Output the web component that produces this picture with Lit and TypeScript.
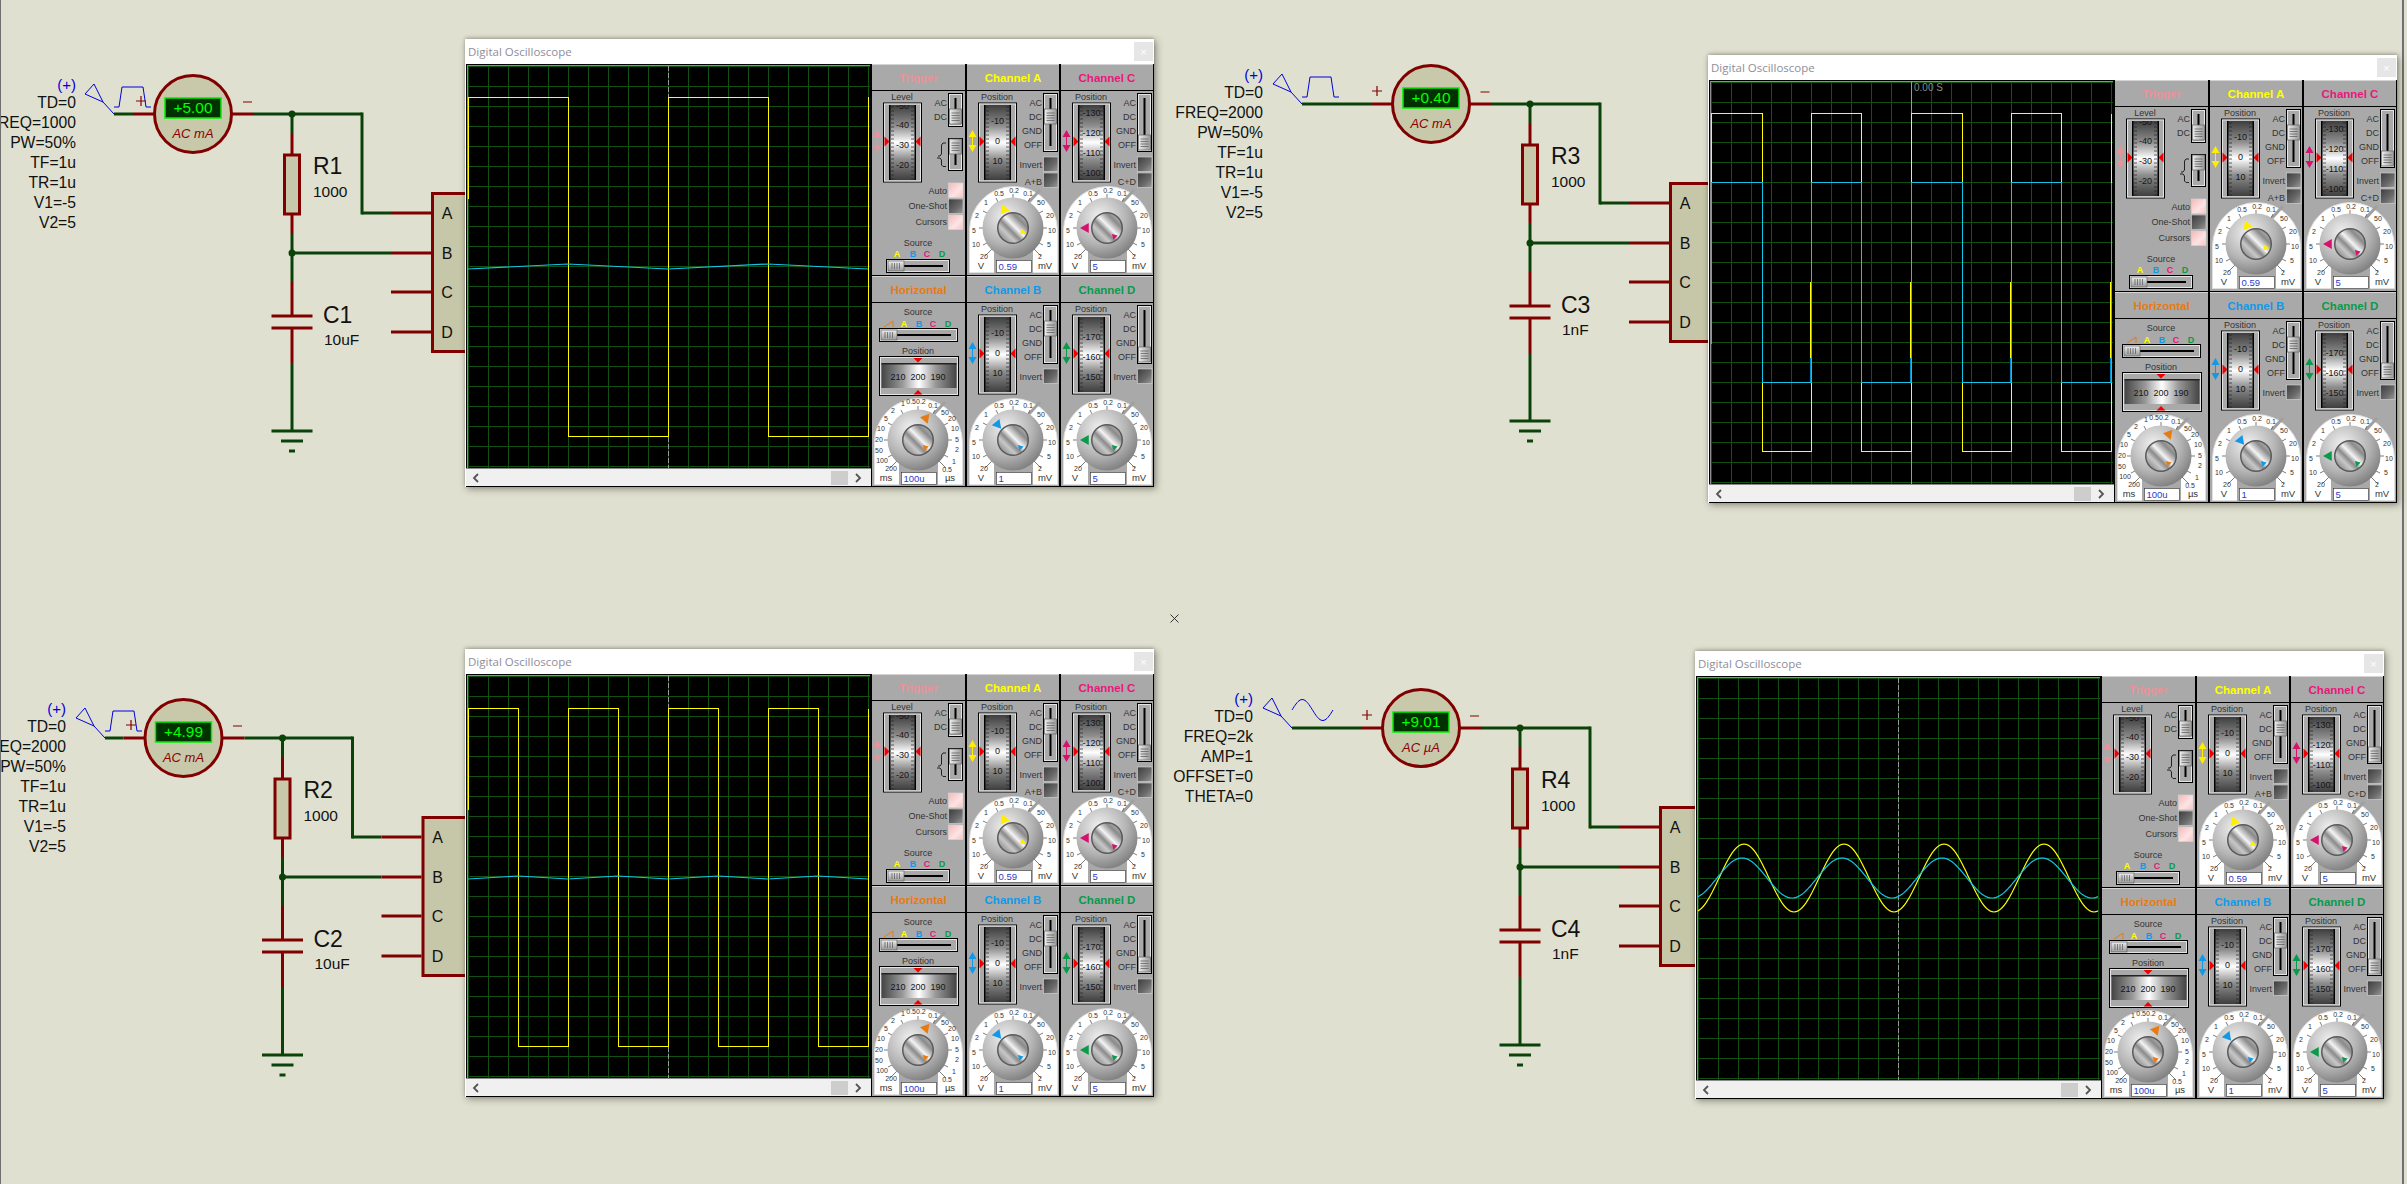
import { LitElement, html, svg, css } from "lit";
import { customElement, property } from "lit/decorators.js";

const RED = "#800000";
const GREEN = "#0a420a";
const BLUE = "#0000dd";

type CircuitDef = {
  ax: number; ay: number; src: number; right: number; plus: number; minus: number;
  reading: string; unit: string; r: string; c: string; cv: string; lines: string[]; sine?: boolean;
};

const CIRCUITS: CircuitDef[] = [
  { ax: 193, ay: 114, src: 114, right: 76, plus: 141, minus: 247, reading: "+5.00", unit: "AC mA", r: "R1", c: "C1", cv: "10uF",
    lines: ["TD=0", "FREQ=1000", "PW=50%", "TF=1u", "TR=1u", "V1=-5", "V2=5"] },
  { ax: 1431, ay: 104, src: 1302, right: 1263, plus: 1377, minus: 1484.5, reading: "+0.40", unit: "AC mA", r: "R3", c: "C3", cv: "1nF",
    lines: ["TD=0", "FREQ=2000", "PW=50%", "TF=1u", "TR=1u", "V1=-5", "V2=5"] },
  { ax: 183.5, ay: 738, src: 105, right: 66, plus: 131, minus: 237, reading: "+4.99", unit: "AC mA", r: "R2", c: "C2", cv: "10uF",
    lines: ["TD=0", "FREQ=2000", "PW=50%", "TF=1u", "TR=1u", "V1=-5", "V2=5"] },
  { ax: 1421, ay: 728, src: 1292, right: 1253, plus: 1367, minus: 1474, reading: "+9.01", unit: "AC µA", r: "R4", c: "C4", cv: "1nF", sine: true,
    lines: ["TD=0", "FREQ=2k", "AMP=1", "OFFSET=0", "THETA=0"] },
];

const seg = (x1: number, y1: number, x2: number, y2: number, c: string, w = 3) =>
  svg`<line x1=${x1} y1=${y1} x2=${x2} y2=${y2} stroke=${c} stroke-width=${w} />`;

function circuit(d: CircuitDef) {
  const { ax, ay, src } = d;
  const jx = ax + 99;
  const sinePts: string[] = [];
  for (let i = 0; i <= 41; i++) sinePts.push(`${src + i},${(ay - 18 - 10.5 * Math.sin((i / 41) * 2 * Math.PI)).toFixed(1)}`);
  const pulse = `M${src} ${ay - 7}h5l3 -20h21l3 20h5`;
  return svg`
    <g>
      ${seg(src, ay, ax - 60, ay, GREEN)}${seg(ax - 60, ay, ax - 38, ay, RED)}
      ${seg(ax + 38, ay, ax + 61, ay, RED)}${seg(ax + 61, ay, ax + 169, ay, GREEN)}
      ${seg(ax + 169, ay - 1.5, ax + 169, ay + 100.5, GREEN)}
      ${seg(ax + 169, ay + 99, ax + 198, ay + 99, GREEN)}${seg(ax + 198, ay + 99, ax + 238, ay + 99, RED)}
      ${seg(jx, ay + 139, ax + 198, ay + 139, GREEN)}${seg(ax + 198, ay + 139, ax + 238, ay + 139, RED)}
      ${seg(ax + 198, ay + 178, ax + 238, ay + 178, RED)}${seg(ax + 198, ay + 218, ax + 238, ay + 218, RED)}
      ${seg(jx, ay, jx, ay + 20, GREEN)}${seg(jx, ay + 20, jx, ay + 41, RED)}
      ${seg(jx, ay + 99, jx, ay + 119, RED)}${seg(jx, ay + 119, jx, ay + 168, GREEN)}
      ${seg(jx, ay + 168, jx, ay + 202, RED)}
      ${seg(jx - 20.5, ay + 202, jx + 20.5, ay + 202, RED)}${seg(jx - 20.5, ay + 214, jx + 20.5, ay + 214, RED)}
      ${seg(jx, ay + 214, jx, ay + 249, RED)}${seg(jx, ay + 249, jx, ay + 317, GREEN)}
      ${seg(jx - 20.5, ay + 317, jx + 20.5, ay + 317, GREEN)}${seg(jx - 11, ay + 327, jx + 11, ay + 327, GREEN)}
      ${seg(jx - 3, ay + 337, jx + 3, ay + 337, GREEN)}
      <circle cx=${jx} cy=${ay} r="3.5" fill=${GREEN} /><circle cx=${jx} cy=${ay + 139} r="3.5" fill=${GREEN} />
      <rect x=${jx - 7.5} y=${ay + 41} width="15" height="59" fill="#c8c8aa" stroke=${RED} stroke-width="3" />
      <rect x=${ax + 239.5} y=${ay + 79.5} width="60" height="158" fill="#c6c6a8" stroke=${RED} stroke-width="3" />
      ${["A", "B", "C", "D"].map((l, i) => svg`<text class="pin" x=${ax + 254} y=${ay + [105, 145, 184, 224][i]} text-anchor="middle">${l}</text>`)}
      <circle cx=${ax} cy=${ay} r="38.5" fill="#c8c8aa" stroke=${RED} stroke-width="3" />
      <rect x=${ax - 28} y=${ay - 16} width="56" height="20" fill="#003200" stroke="#00f000" stroke-width="1.5" />
      <text class="lcd" x=${ax} y=${ay - 1} text-anchor="middle">${d.reading}</text>
      <text class="unit" x=${ax} y=${ay + 24} text-anchor="middle">${d.unit}</text>
      <path d="M${src - 20} ${ay - 30}l-9 10l18 8zM${src - 11} ${ay - 12}L${src} ${ay}" fill="none" stroke=${BLUE} />
      ${d.sine
        ? svg`<polyline points=${sinePts.join(" ")} fill="none" stroke=${BLUE} />`
        : svg`<path d=${pulse} fill="none" stroke=${BLUE} />`}
      <path d="M${d.plus - 5} ${ay - 13}h10M${d.plus} ${ay - 18}v10M${d.minus - 4} ${ay - 12}h9" stroke=${RED} stroke-width="1.2" fill="none" />
      <text class="plus" x=${d.right} y=${ay - 24} text-anchor="end">(+)</text>
      ${d.lines.map((l, i) => svg`<text class="prop" x=${d.right} y=${ay - 6 + i * 20} text-anchor="end">${l}</text>`)}
      <text class="ref" x=${ax + 120} y=${ay + 60}>${d.r}</text>
      <text class="val" x=${ax + 120} y=${ay + 83}>1000</text>
      <text class="ref" x=${ax + 130} y=${ay + 209}>${d.c}</text>
      <text class="val" x=${ax + 131} y=${ay + 231}>${d.cv}</text>
    </g>`;
}

/* ---------------- oscilloscope panel pieces (cell-local coordinates) ---------------- */

const t = (x: number, y: number, s: string, cls = "lb", a = "middle") =>
  svg`<text class=${cls} x=${x} y=${y} text-anchor=${a}>${s}</text>`;

function updown(color: string) {
  return svg`<g fill=${color}>
    <path d="M5.5 39l4 7h-8zM5.5 61l4 -7h-8z" />
    <rect x="5" y="45" width="1" height="10" />
  </g>`;
}

function drum(labels: [string, number][]) {
  const ticks: string[] = [];
  for (let y = 16; y < 89; y += 4) {
    const l = (y - 16) % 20 === 14 ? 5 : 3;
    ticks.push(`M19 ${y}h${l}M42 ${y}h-${l}`);
  }
  return svg`
    <rect x="11.5" y="12" width="38" height="79" fill="#a9a9a9" stroke="#000" />
    <rect x="12.5" y="13" width="36" height="77" fill="none" stroke="#e4e4e4" />
    <rect x="17" y="14" width="27" height="75" fill="#000" />
    <rect x="18.5" y="14" width="24" height="75" fill="url(#drumV)" />
    <path d=${ticks.join("")} stroke="#222" stroke-width=".7" />
    <svg x="18" y="14" width="25" height="75" overflow="hidden">
      ${labels.map(([s, y]) => t(12.5, y - 14 + 3, s, "dr"))}
    </svg>
    <path d="M12.5 45.5l5 5l-5 5z M48.5 45.5l-5 5l5 5z" fill="#f00000" />`;
}

function thumbV(x: number, y: number) {
  return svg`
    <rect x=${x} y=${y} width="12" height="15" fill="url(#thumb)" stroke="#666" stroke-width=".7" />
    <path d="M${x + 2} ${y + 4}h8M${x + 2} ${y + 6.5}h8M${x + 2} ${y + 9}h8M${x + 2} ${y + 11.5}h8" stroke="#555" stroke-width=".7" />`;
}

function switchV(y: number, h: number, thumbY: number) {
  return svg`
    <rect x="76.5" y=${y + .5} width="14" height=${h} fill="#a9a9a9" stroke="#000" />
    <rect x="77.5" y=${y + 1.5} width="12" height=${h - 2} fill="none" stroke="#e4e4e4" />
    <rect x="82.5" y=${y + 5} width="2" height=${h - 10} fill="#000" />
    ${thumbV(77.5, thumbY)}`;
}

function sliderH(x: number, y: number, w: number) {
  return svg`
    <rect x=${x + .5} y=${y + .5} width=${w} height="13" fill="#a9a9a9" stroke="#000" />
    <rect x=${x + 1.5} y=${y + 1.5} width=${w - 2} height="11" fill="none" stroke="#e4e4e4" />
    <rect x=${x + 15} y=${y + 6} width=${w - 21} height="2" fill="#000" />
    <rect x=${x + 2} y=${y + 2} width="16" height="10" fill="url(#thumbH)" stroke="#666" stroke-width=".7" />
    <path d="M${x + 6} ${y + 4}v6M${x + 8.5} ${y + 4}v6M${x + 11} ${y + 4}v6M${x + 13.5} ${y + 4}v6" stroke="#555" stroke-width=".7" />`;
}

const btn = (y: number, pink = false) =>
  svg`<rect x="76.5" y=${y} width="14.5" height="14.5" fill=${pink ? "url(#pinkBtn)" : "url(#darkBtn)"} stroke="#d8d8d8" stroke-width=".6" />`;

function marker(cx: number, cy: number, r: number, rot: number, color: string) {
  return svg`<path transform="translate(${cx} ${cy}) rotate(${rot})" d="M${r} 0L${-r * .75} ${-r}L${-r * .75} ${r}z" fill=${color} />`;
}

type Mark = { bdx: number; bdy: number; brot: number; sdx: number; sdy: number; srot: number };

const SCALE_V: [string, number, number][] = [
  ["0.5", -14, -35], ["0.2", 1, -38], ["0.1", 15, -35], ["1", -27, -26], ["2", -36, -13], ["5", -39, 2], ["10", -37, 16], ["20", -29, 28],
  ["50", 28, -26], ["20", 37, -13], ["10", 39, 2], ["5", 36, 16], ["2", 27, 28],
];
const SCALE_T: [string, number, number][] = [
  ["0.50.2", -2, -39], ["0.1", 15, -35], ["1", -15, -37], ["2", -25, -30], ["5", -32, -22], ["10", -37, -12], ["20", -39, -1], ["50", -39, 10], ["100", -36, 20], ["200", -27, 28],
  ["50", 27, -28], ["20", 34, -22], ["10", 37, -12], ["5", 39, -1], ["2", 39, 9], ["1", 36, 21], ["0.5", 29, 29],
];

function dial(color: string, m: Mark, value: string, units: [string, string], scale: [string, number, number][]) {
  const cx = 46, cy = 137;
  return svg`
    <path d="M2.5 181.5V139.5A44 44 0 0 1 90.5 139.5V181.5Z" fill="#fff" stroke="#e0e0e0" />
    <rect x="27" y="160" width="39" height="22" fill="#a9a9a9" />
    <path d="M${cx + 27} ${cy - 38}L${cx + 16} ${cy - 26}" stroke="#a0a0a0" stroke-width="3" />
    <path d="M${cx - 21} ${cy + 21}l-7 7M${cx + 21} ${cy + 21}l7 7M${cx - 30} ${cy}h-4M${cx + 30} ${cy}h4M${cx - 26} ${cy - 15}l-4 -2M${cx + 26} ${cy - 15}l4 -2M${cx - 15} ${cy - 26}l-2 -4M${cx} ${cy - 30}v-4M${cx + 15} ${cy - 26}l2 -4M${cx - 26} ${cy + 15}l-4 2M${cx + 26} ${cy + 15}l4 2" stroke="#444" stroke-width=".7" />
    ${scale.map(([s, dx, dy]) => t(cx + dx, cy + dy + 2.5, s, "sc"))}
    ${t(cx - 32, cy + 41, units[0], "un")}${t(cx + 32, cy + 41, units[1], "un")}
    <circle cx=${cx} cy=${cy} r="30.5" fill="url(#knob)" />
    <circle cx=${cx} cy=${cy} r="16" fill="#5a5a5a" />
    <circle cx=${cx} cy=${cy} r="14.5" fill="url(#metal)" />
    ${marker(cx + m.bdx, cy + m.bdy, 5, m.brot, color)}
    ${marker(cx + m.sdx, cy + m.sdy, 3, m.srot, color)}
    <rect x="29.5" y="169.5" width="35" height="12" fill="#fff" stroke="#333" stroke-width=".6" />
    ${t(31.5, 178.5, value, "box", "start")}`;
}

const cLabels = (...rows: [string, number][]) => rows.map(([s, y]) => t(75, y, s, "lb", "end"));

function channel(color: string, labels: [string, number][], thumbY: number, m: Mark, value: string, aux?: string) {
  return svg`
    ${t(30, 9, "Position")}
    ${drum(labels)}
    ${updown(color)}
    ${cLabels(["AC", 15], ["DC", 29], ["GND", 43], ["OFF", 57])}
    ${switchV(2, 58, thumbY)}
    ${cLabels(["Invert", 77])}
    ${btn(66)}
    ${aux ? svg`${cLabels([aux, 94])}${btn(82)}` : ""}
    ${dial(color, m, value, ["V", "mV"], SCALE_V)}`;
}

function trigger() {
  return svg`
    ${t(30, 9, "Level")}
    ${drum([["-50", 15], ["-40", 34], ["-30", 54], ["-20", 74]])}
    ${updown("#e8939a")}
    ${cLabels(["AC", 15], ["DC", 29])}
    ${switchV(2, 33, 18)}
    ${switchV(47, 32, 48)}
    <path d="M74 52h-3l-1.5 2v9l-1.5 2h-2M65 67h3l1.5 2v5l1.5 1.5h3" fill="none" stroke="#222" />
    ${cLabels(["Auto", 103], ["One-Shot", 118], ["Cursors", 134])}
    ${btn(92, true)}${btn(108)}${btn(124, true)}
    ${t(46, 155, "Source")}
    ${[["A", 25, "#ffff00"], ["B", 41, "#1199e8"], ["C", 55, "#e8187a"], ["D", 70, "#0a9a4a"]].map(
      ([s, x, c]) => svg`<text class="src" x=${x} y="166" text-anchor="middle" style="fill:${c}">${s}</text>`)}
    ${sliderH(14, 168, 63)}`;
}

function horizontal() {
  return svg`
    ${t(46, 12, "Source")}
    <path d="M12 24l9 -6v6" fill="none" stroke="#e87a10" />
    ${[["A", 32, "#ffff00"], ["B", 47, "#1199e8"], ["C", 61, "#e8187a"], ["D", 76, "#0a9a4a"]].map(
      ([s, x, c]) => svg`<text class="src" x=${x} y="24" text-anchor="middle" style="fill:${c}">${s}</text>`)}
    ${sliderH(7, 25, 78)}
    ${t(46, 51, "Position")}
    <rect x="7.5" y="53.5" width="79" height="39" fill="#a9a9a9" stroke="#000" />
    <rect x="8.5" y="54.5" width="77" height="37" fill="none" stroke="#e4e4e4" />
    <rect x="9.5" y="60" width="75" height="25" fill="url(#drumH)" />
    <rect x="9.5" y="60" width="75" height="1.5" fill="#222" />
    ${t(26, 76.5, "210", "dr")}${t(46, 76.5, "200", "dr")}${t(66, 76.5, "190", "dr")}
    <path d="M41.5 55h9l-4.5 4.5zM41.5 91.5h9l-4.5 -4.5z" fill="#f00000" />
    ${dial("#e87a10", { bdx: 8, bdy: -21, brot: 70, sdx: 7, sdy: 7, srot: 225 }, "100u", ["ms", "µs"], SCALE_T)}`;
}

type Cell = { title: string; color: string; body: () => unknown };

const CELLS: Cell[] = [
  { title: "Trigger", color: "#e8939a", body: trigger },
  { title: "Channel A", color: "#ffff00", body: () => channel("#ffee00", [["-10", 30], ["0", 50], ["10", 70]], 18, { bdx: -8, bdy: -18, brot: 10, sdx: 10, sdy: 4, srot: 15 }, "0.59", "A+B") },
  { title: "Channel C", color: "#e8187a", body: () => channel("#d8106e", [["-130", 22], ["-120", 42], ["-110", 62], ["-100", 82]], 44, { bdx: -22, bdy: 0, brot: 180, sdx: 7, sdy: 8, srot: 225 }, "5", "C+D") },
  { title: "Horizontal", color: "#e87a10", body: horizontal },
  { title: "Channel B", color: "#1199e8", body: () => channel("#1199e8", [["-10", 30], ["0", 50], ["10", 70]], 18, { bdx: -15, bdy: -15, brot: 50, sdx: 7, sdy: 7, srot: 225 }, "1") },
  { title: "Channel D", color: "#0a9a4a", body: () => channel("#0a9a4a", [["-170", 34], ["-160", 54], ["-150", 74]], 44, { bdx: -22, bdy: 0, brot: 180, sdx: 7, sdy: 7, srot: 225 }, "5") },
];

/* ---------------- traces ---------------- */

type Kind = "pulse1" | "pulse2" | "pulse3" | "sine";

function wave(peak: number, amp: number) {
  const p: string[] = [];
  for (let x = 0; x <= 401; x += 2) p.push(`${x},${(200 - amp * Math.cos((2 * Math.PI * (x - peak)) / 100)).toFixed(1)}`);
  return p.join(" ");
}

function traces(kind: Kind) {
  const Y = "#ffff00";
  const C = "#14c4e8";
  if (kind === "pulse1") return svg`
    <path shape-rendering="crispEdges" d="M.5 133V31.5H100.5V370.5H200.5V31.5H300.5V370.5H400.5V31" fill="none" stroke=${Y} stroke-width="1" />
    <polyline points=${`0,203 100,198 200,203 300,198 400,203`} fill="none" stroke=${C} stroke-width="1.2" />`;
  if (kind === "pulse2") return svg`
    <path shape-rendering="crispEdges" d="M.5 100V31.5H51.5V369.5H100.5V31.5H150.5V369.5H200.5V31.5H251.5V369.5H300.5V31.5H350.5V369.5H400.5V31.5" fill="none" stroke=${Y} stroke-width="1" />
    <path shape-rendering="crispEdges" d="M99.5 200V276M199.5 200V276M299.5 200V276M399.5 200V276" stroke=${Y} stroke-width="1" />
    <path shape-rendering="crispEdges" d="M.5 262V100.5H51.5V300.5H100.5V100.5H150.5V300.5H200.5V100.5H251.5V300.5H300.5V100.5H350.5V300.5H400.5V100.5" fill="none" stroke=${C} />
    <path shape-rendering="crispEdges" d="M99.5 276V300M199.5 276V300M299.5 276V300M399.5 276V300" stroke="#0090d0" stroke-width="1" />`;
  if (kind === "pulse3") return svg`
    <path shape-rendering="crispEdges" d="M.5 134V32.5H50.5V370.5H100.5V32.5H150.5V370.5H200.5V32.5H250.5V370.5H300.5V32.5H350.5V370.5H400.5V32.5" fill="none" stroke=${Y} />
    <polyline points=${`0,203 50,200 100,203 150,200 200,203 250,200 300,203 350,200 400,203`} fill="none" stroke=${C} stroke-width="1.2" />`;
  return svg`
    <polyline points=${wave(46, 34)} fill="none" stroke=${Y} stroke-width="1.2" />
    <polyline points=${wave(44, 20)} fill="none" stroke=${C} stroke-width="1.2" />`;
}

const GRID = (() => {
  let d = "";
  for (let i = 0; i <= 400; i += 20) d += `M${i + .5} 0V402M0 ${i + .5}H402`;
  return d;
})();

/* ---------------- window element ---------------- */

@customElement("scope-window")
export class ScopeWindow extends LitElement {
  @property({ type: String }) kind: Kind = "pulse1";

  static styles = css`
    :host { display: block; width: 689px; height: 448px; background: #fff; box-shadow: 2px 2px 7px rgba(40,40,30,.45), 0 -1px 3px rgba(40,40,30,.25); font-family: "Liberation Sans", Arial, sans-serif; }
    .title { height: 25px; background: #fff; display: flex; align-items: center; justify-content: space-between; padding: 0 1px 0 3px; box-sizing: border-box; }
    .name { font: 11.5px "Open Sans", sans-serif; color: #8e8e9a; }
    .close { width: 19px; height: 19px; background: #e6e6e6; color: #fff; font: 11px "Liberation Sans", sans-serif; display: flex; align-items: center; justify-content: center; }
    .body { display: flex; height: 423px; }
    .left { width: 406px; display: flex; flex-direction: column; background: #fff; }
    .frame { width: 405px; height: 404px; margin-left: 1px; border: solid; border-width: 1px 1px 0 1px; border-color: #000; box-sizing: border-box; background: #8e8e8e; padding: 1px 0 0 1px; }
    .screen { display: block; width: 402px; height: 402px; background: #000; }
    .scroll { flex: 1; background: #f0f0f0; border-top: 1px solid #888; border-bottom: 1px solid #000; display: flex; align-items: center; justify-content: space-between; padding: 0 9px 0 6px; margin-left: 1px; }
    .arrow { display: block; }
    .track { flex: 1; display: flex; justify-content: flex-end; padding-right: 6px; }
    .thumb { width: 17px; height: 14px; background: #cdcdcd; }
    .panel { width: 283px; box-sizing: border-box; background: #000; padding: 0 1px 1px 1px; display: grid; grid-template-columns: 93px 92px 92px; grid-template-rows: 26px 184px 26px 183px; column-gap: 2px; row-gap: 1px; }
    .head { background: #a9a9a9; display: flex; align-items: center; justify-content: center; font: bold 11.5px "Liberation Sans", sans-serif; padding-top: 1px; box-sizing: border-box; border-top: 1px solid #d4d4d4; }
    .cell { display: block; background: #a9a9a9; width: 100%; height: 100%; overflow: hidden; }
    .defs { display: block; width: 0; height: 0; flex: none; }
    text { font-family: "Liberation Sans", Arial, sans-serif; }
    .lb { font-size: 9px; fill: #333; }
    .un { font-size: 9.5px; fill: #333; }
    .dr { font-size: 9px; fill: #151515; }
    .sc { font-size: 7px; fill: #333; }
    .src { font-size: 9px; font-weight: bold; }
    .box { font-size: 9.5px; fill: #2a3ad0; }
    .stamp { font-size: 10px; fill: #8a8a8a; }
  `;

  private cell(c: Cell) {
    return html`<svg class="cell">${c.body()}</svg>`;
  }

  render() {
    const top = CELLS.slice(0, 3);
    const bottom = CELLS.slice(3);
    return html`
      <div class="title">
        <span class="name">Digital Oscilloscope</span>
        <span class="close">×</span>
      </div>
      <div class="body">
        <svg class="defs">
          <defs>
            <linearGradient id="drumV" x1="0" y1="0" x2="0" y2="1">
              <stop offset="0" stop-color="#3e3e3e" /><stop offset=".28" stop-color="#8e8e8e" /><stop offset=".5" stop-color="#fff" /><stop offset=".72" stop-color="#8e8e8e" /><stop offset="1" stop-color="#3e3e3e" />
            </linearGradient>
            <linearGradient id="drumH" x1="0" y1="0" x2="1" y2="0">
              <stop offset="0" stop-color="#444" /><stop offset=".28" stop-color="#999" /><stop offset=".5" stop-color="#fff" /><stop offset=".72" stop-color="#999" /><stop offset="1" stop-color="#444" />
            </linearGradient>
            <linearGradient id="thumb" x1="0" y1="0" x2="1" y2="0">
              <stop offset="0" stop-color="#eee" /><stop offset="1" stop-color="#999" />
            </linearGradient>
            <linearGradient id="thumbH" x1="0" y1="0" x2="0" y2="1">
              <stop offset="0" stop-color="#eee" /><stop offset="1" stop-color="#999" />
            </linearGradient>
            <linearGradient id="darkBtn" x1="0" y1="0" x2="1" y2="1">
              <stop offset="0" stop-color="#3c3c3c" /><stop offset=".6" stop-color="#6a6a6a" /><stop offset="1" stop-color="#9a9a9a" />
            </linearGradient>
            <linearGradient id="pinkBtn" x1="0" y1="0" x2="1" y2="1">
              <stop offset="0" stop-color="#f4b8b8" /><stop offset=".6" stop-color="#fde4e4" /><stop offset="1" stop-color="#f6c4c4" />
            </linearGradient>
            <radialGradient id="knob" cx=".38" cy=".32" r=".8">
              <stop offset="0" stop-color="#f2f2f2" /><stop offset=".55" stop-color="#b4b4b4" /><stop offset="1" stop-color="#6e6e6e" />
            </radialGradient>
            <linearGradient id="metal" x1="0" y1="1" x2="1" y2="0">
              <stop offset="0" stop-color="#6c6c6c" /><stop offset=".3" stop-color="#c8c8c8" /><stop offset=".42" stop-color="#8a8a8a" /><stop offset=".55" stop-color="#f4f4f4" /><stop offset=".75" stop-color="#8a8a8a" /><stop offset="1" stop-color="#d0d0d0" />
            </linearGradient>
          </defs>
        </svg>
        <div class="left">
          <div class="frame">
            <svg class="screen" viewBox="0 0 402 402">
              <path d=${GRID} stroke="#115011" stroke-width="1" fill="none" shape-rendering="crispEdges" />
              <line x1="200.5" y1="0" x2="200.5" y2="402" stroke="#9a9a9a" stroke-dasharray=${this.kind === "pulse2" ? "none" : "5 2"} shape-rendering="crispEdges" />
              ${traces(this.kind)}
              ${this.kind === "pulse2" ? svg`<text class="stamp" x="203" y="9">0.00 S</text>` : ""}
            </svg>
          </div>
          <div class="scroll">
            <svg class="arrow" width="8" height="10" viewBox="0 0 8 10"><path d="M6 1L2 5l4 4" fill="none" stroke="#555" stroke-width="1.8" /></svg>
            <div class="track"><div class="thumb"></div></div>
            <svg class="arrow" width="8" height="10" viewBox="0 0 8 10"><path d="M2 1l4 4l-4 4" fill="none" stroke="#555" stroke-width="1.8" /></svg>
          </div>
        </div>
        <div class="panel">
          ${top.map((c) => html`<div class="head" style="color:${c.color}">${c.title}</div>`)}
          ${top.map((c) => this.cell(c))}
          ${bottom.map((c) => html`<div class="head" style="color:${c.color}">${c.title}</div>`)}
          ${bottom.map((c) => this.cell(c))}
        </div>
      </div>`;
  }
}

const WINDOWS: { x: number; y: number; kind: Kind }[] = [
  { x: 465, y: 39, kind: "pulse1" },
  { x: 1708, y: 55, kind: "pulse2" },
  { x: 465, y: 649, kind: "pulse3" },
  { x: 1695, y: 651, kind: "sine" },
];

@customElement("app-root")
export class AppRoot extends LitElement {
  static styles = css`
    :host { display: block; position: relative; width: 2407px; height: 1184px; overflow: hidden; background: #dfe0d0; }
    .sheet { position: absolute; inset: 0; display: block; }
    .win { position: absolute; }
    .edgeL { position: absolute; left: 0; top: 0; bottom: 0; width: 1px; background: #707070; }
    .edgeR { position: absolute; right: 3px; top: 0; bottom: 0; width: 2px; background: #707070; }
    text { font-family: "Liberation Sans", Arial, sans-serif; }
    .prop { font-size: 15.7px; fill: #111; }
    .plus { font-size: 15px; fill: #0000dd; }
    .ref { font-size: 23px; fill: #111; }
    .val { font-size: 15.5px; fill: #111; }
    .pin { font-size: 16px; fill: #111; }
    .lcd { font-size: 15.4px; fill: #00ff00; }
    .unit { font-size: 13px; font-style: italic; fill: #8b0000; }
  `;

  render() {
    return html`
      <svg class="sheet" width="2407" height="1184" viewBox="0 0 2407 1184">
        ${CIRCUITS.map(circuit)}
        <path d="M1170.5 614.5l8 8M1178.5 614.5l-8 8" stroke="#333" />
      </svg>
      <div class="edgeL"></div>
      <div class="edgeR"></div>
      ${WINDOWS.map((w) => html`<scope-window class="win" kind=${w.kind} style="left:${w.x}px;top:${w.y}px"></scope-window>`)}
    `;
  }
}
